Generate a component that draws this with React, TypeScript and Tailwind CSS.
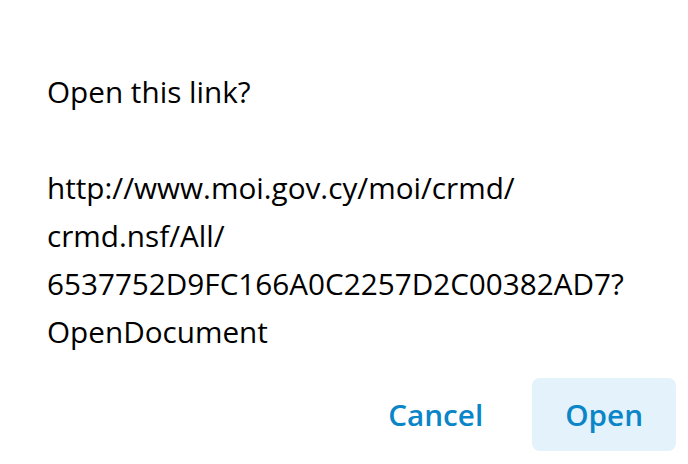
export default function App() {
  return (
    <div className="flex h-[464px] w-[688px] flex-col bg-white font-['Open_Sans',sans-serif] text-[29.7px] leading-[48px] text-black">
      <div className="px-[47px] pt-[68px]">
        <p>Open this link?</p>
        <p className="mt-[48px]">
          http://www.moi.gov.cy/moi/crmd/
          <br />
          crmd.nsf/All/
          <br />
          6537752D9FC166A0C2257D2C00382AD7?
          <br />
          OpenDocument
        </p>
      </div>
      <div className="mt-auto flex justify-end gap-[16px] pb-[13px] pr-[12px]">
        <button
          type="button"
          className="h-[73px] rounded-[8px] px-[33px] font-semibold text-[#0a85c7]"
        >
          Cancel
        </button>
        <button
          type="button"
          className="h-[73px] rounded-[8px] bg-[#e3f2fb] px-[33px] font-semibold text-[#0a85c7]"
        >
          Open
        </button>
      </div>
    </div>
  );
}
